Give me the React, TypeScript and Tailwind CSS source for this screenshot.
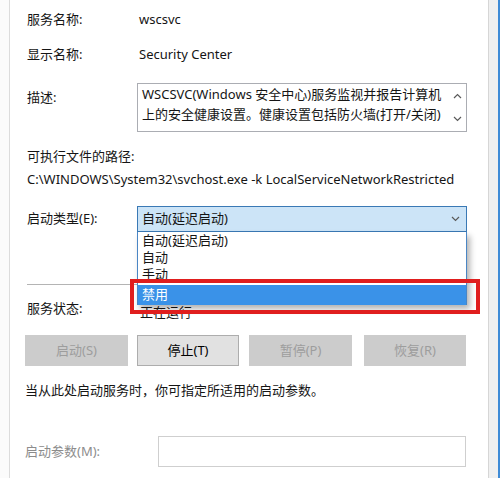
import React from 'react';

const font = { fontFamily: '"Noto Sans", "Noto Sans CJK SC", sans-serif' };

const Chevron = ({ up = false }: { up?: boolean }) => (
    <svg width="9" height="6" viewBox="0 0 9 6" className="block">
        <path
            d={up ? "M1 5 L4.5 1.5 L8 5" : "M1 1 L4.5 4.5 L8 1"}
            fill="none"
            stroke="#5a5a5a"
            strokeWidth="1.2"
        />
    </svg>
);

const DisabledButton = ({ label, className = "" }: { label: string; className?: string }) => (
    <div className={`h-[31px] flex items-center justify-center bg-[#cccccc] text-[#9d9d9d] ${className}`}>
        {label}
    </div>
);

const options = ["自动(延迟启动)", "自动", "手动"];

export default function App() {
    return (
        <div className="w-[504px] h-[478px] flex bg-white text-[13px] text-[#151515] overflow-hidden" style={font}>
            {/* left window edge */}
            <div className="w-[10px] shrink-0 bg-[#fbfbfb] border-r border-[#dcdcdc]" />

            {/* dialog body */}
            <div className="w-[478px] shrink-0 pl-[17px] flex flex-col">
                <div className="mt-[10px] h-5 flex items-center">
                    <span className="w-[112px]">服务名称:</span>
                    <span>wscsvc</span>
                </div>
                <div className="mt-[15px] h-5 flex items-center">
                    <span className="w-[112px]">显示名称:</span>
                    <span>Security Center</span>
                </div>

                <div className="mt-[18px] flex">
                    <span className="w-[110px] pt-[4px] leading-5">描述:</span>
                    <div className="w-[330px] h-[49px] border border-[#abadb3] flex">
                        <div className="flex-1 pl-[4px] leading-[20px] whitespace-nowrap">
                            <div>WSCSVC(Windows 安全中心)服务监视并报告计算机</div>
                            <div>上的安全健康设置。健康设置包括防火墙(打开/关闭)</div>
                        </div>
                        <div className="w-[18px] flex flex-col items-center justify-between py-[9px]">
                            <Chevron up />
                            <Chevron />
                        </div>
                    </div>
                </div>

                <div className="mt-[15px] h-5 flex items-center">可执行文件的路径:</div>
                <div className="mt-[3px] h-5 flex items-center whitespace-nowrap">
                    C:\WINDOWS\System32\svchost.exe -k LocalServiceNetworkRestricted
                </div>

                <div className="mt-[16px] flex items-center">
                    <span className="w-[110px]">启动类型(E):</span>
                    <div className="relative">
                        <div className="w-[330px] h-[26px] bg-[#cce4f7] border border-[#3a79b5] flex items-center justify-between pl-[4px] pr-[6px]">
                            <span>自动(延迟启动)</span>
                            <Chevron />
                        </div>

                        {/* open list */}
                        <div className="absolute left-0 top-full w-[330px] h-[73px] bg-white border border-t-0 border-[#4a86c5] z-10 shadow-[3px_4px_6px_rgba(0,0,0,0.3)] flex flex-col">
                            {options.map((o) => (
                                <div key={o} className="h-[17px] leading-[17px] pl-[4px]">
                                    {o}
                                </div>
                            ))}
                            <div className="mt-[2px] flex-1 bg-[#3a92e8] text-white pl-[4px] flex items-center">禁用</div>
                        </div>

                        {/* highlight frame */}
                        <div className="absolute left-[-7px] top-[73px] w-[350px] h-[35px] border-[4px] border-[#e01e1e] z-20" />
                    </div>
                </div>

                <div className="mt-[52px] w-[440px] h-px bg-[#b4b4b4]" />

                <div className="mt-[13px] h-5 flex items-start">
                    <span className="w-[113px] leading-5">服务状态:</span>
                    <span className="pt-[4px] leading-5">正在运行</span>
                </div>

                <div className="mt-[17px] -ml-[2px] flex">
                    <DisabledButton label="启动(S)" className="w-[103px]" />
                    <div className="ml-[9px] w-[102px] h-[31px] flex items-center justify-center bg-[#e1e1e1] border border-[#adadad] text-black">
                        停止(T)
                    </div>
                    <DisabledButton label="暂停(P)" className="ml-[10px] w-[103px]" />
                    <DisabledButton label="恢复(R)" className="ml-[12px] w-[102px]" />
                </div>

                <div className="mt-[15px] -ml-[2px] h-5 flex items-center">
                    当从此处启动服务时，你可指定所适用的启动参数。
                </div>

                <div className="mt-[35px] -ml-[2px] flex items-center">
                    <span className="w-[133px] text-[#8c8c8c]">启动参数(M):</span>
                    <div className="w-[308px] h-[31px] border border-[#cfcfcf] bg-white" />
                </div>
            </div>

            {/* right window edge */}
            <div className="w-[10px] shrink-0 bg-[#f0f0f0] border-l border-[#d6d6d6]" />
            <div className="w-[2px] shrink-0 bg-[#3f8bd6]" />
            <div className="flex-1 bg-white" />
        </div>
    );
}
